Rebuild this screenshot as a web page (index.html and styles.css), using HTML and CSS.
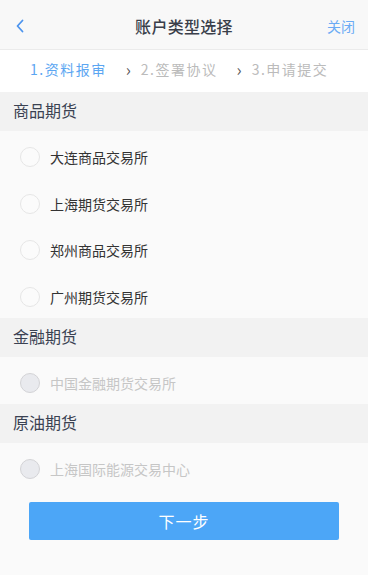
FILE: index.html
```html
<!DOCTYPE html>
<html lang="zh">
<head>
<meta charset="utf-8">
<link rel="stylesheet" href="styles.css">
</head>
<body>
<div class="header">
  <div class="back">
    <svg width="10" height="14" viewBox="0 0 10 14"><polyline points="7.5,1.5 2.5,7 7.5,12.5" fill="none" stroke="#4c94ee" stroke-width="1.8" stroke-linecap="round" stroke-linejoin="round"/></svg>
  </div>
  <div class="title">账户类型选择</div>
  <div class="close">关闭</div>
</div>
<div class="steps">
  <span class="step active">1.资料报审</span>
  <span class="arrow">›</span>
  <span class="step">2.签署协议</span>
  <span class="arrow">›</span>
  <span class="step">3.申请提交</span>
</div>
<div class="section-title">商品期货</div>
<div class="item"><span class="radio"></span><span class="label">大连商品交易所</span></div>
<div class="item"><span class="radio"></span><span class="label">上海期货交易所</span></div>
<div class="item"><span class="radio"></span><span class="label">郑州商品交易所</span></div>
<div class="item"><span class="radio"></span><span class="label">广州期货交易所</span></div>
<div class="section-title">金融期货</div>
<div class="item disabled"><span class="radio"></span><span class="label">中国金融期货交易所</span></div>
<div class="section-title">原油期货</div>
<div class="item disabled"><span class="radio"></span><span class="label">上海国际能源交易中心</span></div>
<div class="footer"><button class="next">下一步</button></div>
</body>
</html>
```
FILE: styles.css
```css
* { box-sizing: border-box; }
html, body { margin: 0; padding: 0; }
body {
  background: #fafafa;
  font-family: "Noto Sans CJK SC", "Noto Sans", sans-serif;
  width: 368px;
  min-height: 575px;
}
.header {
  height: 50px;
  padding-top: 3px;
  background: #f8f8f8;
  border-bottom: 1px solid #ebebeb;
  display: flex;
  align-items: center;
  justify-content: space-between;
}
.back {
  width: 60px;
  padding-left: 15px;
  display: flex;
  align-items: center;
}
.back svg { display: block; }
.title {
  font-size: 16px;
  font-weight: 500;
  color: #3a3f4a;
  letter-spacing: 0.3px;
}
.close {
  width: 60px;
  text-align: right;
  padding-right: 13px;
  font-size: 14px;
  color: #6aabf5;
}
.steps {
  height: 42px;
  padding: 0 0 4px 30px;
  background: #fff;
  display: flex;
  align-items: center;
  font-size: 14px;
  color: #bbbbbb;
  letter-spacing: 1.5px;
}
.step.active { color: #5ba6f2; }
.arrow {
  color: #555;
  font-size: 17px;
  margin: 0 10px 0 19px;
  letter-spacing: 0;
  position: relative;
  top: -1px;
}
.section-title {
  height: 39px;
  background: #f2f2f2;
  padding: 0 0 3px 13px;
  display: flex;
  align-items: center;
  font-size: 16px;
  color: #3b4252;
}
.item {
  height: 46.75px;
  display: flex;
  align-items: center;
  padding: 5px 0 0 20px;
  background: #fafafa;
}
.radio {
  width: 20px;
  height: 20px;
  border-radius: 50%;
  border: 1px solid #e6e6e6;
  background: #fbfbfb;
  margin-right: 10px;
}
.label {
  font-size: 14px;
  color: #333;
}
.item.disabled { height: 47px; }
.item.disabled .radio {
  background: #e9eaee;
  border-color: #d3d3d6;
}
.item.disabled .label { color: #c6c6c6; }
.footer {
  padding: 12px 29px 0;
}
.next {
  width: 100%;
  height: 38px;
  border: none;
  border-radius: 2px;
  background: #4ca6f7;
  color: #fff;
  font-family: inherit;
  font-size: 16px;
  letter-spacing: 1px;
}
```
